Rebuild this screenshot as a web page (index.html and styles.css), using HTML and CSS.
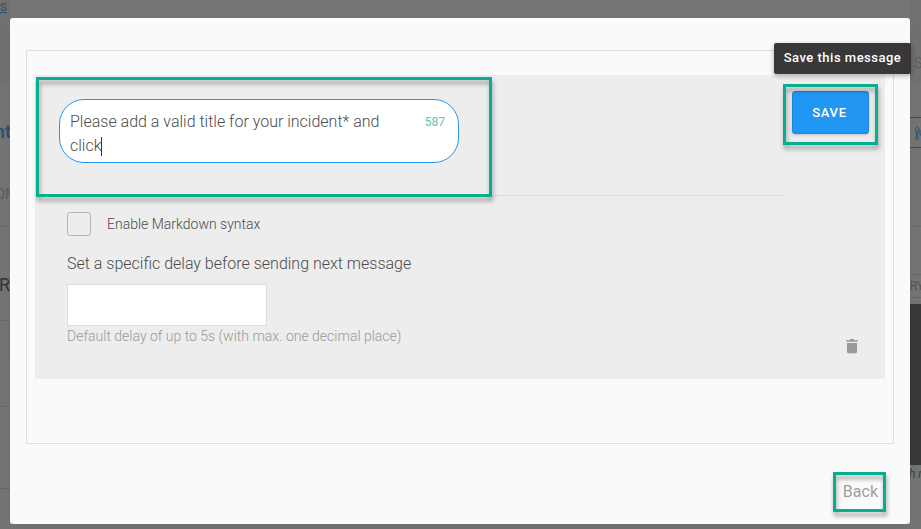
FILE: index.html
```html
<!DOCTYPE html>
<html lang="en">
<head>
<meta charset="utf-8">
<title>Edit message</title>
<link rel="stylesheet" href="styles.css">
</head>
<body>
<div class="screen">
  <aside class="edge edge-left">
    <div class="band"><span class="link">cs</span></div>
    <div class="row heading">nt</div>
    <div class="row tab"><span>OM</span></div>
    <div class="row section">R</div>
    <div class="field"></div>
    <div class="row rule"></div>
    <div class="row dashed"></div>
  </aside>
  <main class="modal">
    <section class="frame">
      <div class="panel">
        <div class="editor">
          <div class="compose">
            <div class="bubble">
              <div class="message">Please add a valid title for your incident* and click<span class="caret"></span></div>
              <span class="count">587</span>
            </div>
            <div class="mark mark-message"></div>
          </div>
          <label class="option"><span class="checkbox"></span><span>Enable Markdown syntax</span></label>
          <div class="delay">
            <div class="label">Set a specific delay before sending next message</div>
            <div class="input"></div>
            <div class="hint">Default delay of up to 5s (with max. one decimal place)</div>
          </div>
        </div>
        <div class="actions">
          <div class="save-wrap">
            <button class="save">SAVE</button>
            <div class="mark mark-save"></div>
            <div class="tooltip">Save this message</div>
          </div>
          <svg class="trash" viewBox="0 0 12 15"><path d="M4.3 0h3.4l.8 1.2H12v1.5H0V1.2h3.5zM1 4h10v8.8c0 .8-.5 1.4-1.3 1.4H2.3c-.8 0-1.3-.6-1.3-1.4z"/></svg>
        </div>
      </div>
    </section>
    <footer class="footer"><span class="back">Back<span class="mark mark-back"></span></span></footer>
  </main>
  <aside class="edge edge-right">
    <div class="band band-right">S</div>
    <div class="share"><svg viewBox="0 0 12 14"><path d="M3 1a1.5 1.5 0 0 1 0 3L2 7l1 3a1.5 1.5 0 1 1-2 0l1-3-1-3a1.5 1.5 0 0 1 2-3M5 3v5h7" /></svg></div>
    <div class="row line"></div>
    <div class="chip">RY</div>
    <div class="dark"></div>
    <div class="note">h m</div>
  </aside>
</div>
</body>
</html>
```
FILE: styles.css
```css
* { box-sizing: border-box; }
body { margin: 0; font-family: Roboto, "Liberation Sans", sans-serif; }
.screen {
  width: 921px; height: 529px; overflow: hidden;
  display: grid; grid-template-columns: 10px 900px 11px;
  background: #757575;
}
.edge { height: 529px; overflow: hidden; white-space: nowrap; color: #545454; }
.edge-left > div { display: flex; justify-content: flex-end; }
.band { height: 83px; background: #717171; font-size: 14px; line-height: 12px; }
.link { color: #2d5170; text-decoration: underline; margin-right: 3px; }
.row.heading { height: 97px; padding-top: 39px; font-size: 18px; line-height: 20px; font-weight: 700; color: #2d5170; margin-right: -1px; }
.row.tab { height: 47px; padding-top: 4px; line-height: 20px; font-size: 15px; font-weight: 300; border-bottom: 1px solid #686868; }
.row.tab span { margin-right: -8px; }
.row.section { height: 93px; padding-top: 48px; font-size: 18px; line-height: 20px; color: #333; }
.field { height: 38px; border: 1px solid #696969; border-width: 1px 1px 0 0; border-top-right-radius: 3px; }
.row.rule { height: 49px; border-bottom: 1px solid #686868; }
.row.dashed { height: 82px; border-bottom: 1px dashed #666; }
.modal {
  margin-top: 18px; height: 506px; padding: 32px 16px 0;
  background: #fafafa; border-radius: 3px;
  box-shadow: 0 8px 16px rgba(0,0,0,.06);
  position: relative;
}
.frame { height: 394px; padding: 24px 8px; border: 1px solid #dedede; }
.panel { display: flex; justify-content: space-between; height: 304px; padding-left: 24px; background: #ededed; }
.editor { width: 725px; }
.compose { position: relative; height: 121px; padding-top: 24px; border-bottom: 1px solid #dcdcdc; }
.bubble {
  display: flex; justify-content: space-between;
  width: 400px; height: 64px; padding: 9px 13px 0 10px;
  border: 1px solid #2196f3; border-radius: 25px; background: #fff;
}
.message { width: 330px; padding-top: 1px; font-size: 16px; line-height: 24px; font-weight: 300; color: #4c4c4c; }
.caret { display: inline-block; width: 1px; height: 19px; margin-left: -1px; background: #333; vertical-align: -5px; }
.count { font-size: 12px; line-height: 26px; color: #5bc6ae; }
.mark { position: absolute; border: 3px solid #07ae8f; pointer-events: none; filter: drop-shadow(1px 4px 2px rgba(0,0,0,.35)); }
.mark-message { left: -23px; top: 2px; width: 456px; height: 120px; }
.option { display: flex; align-items: center; gap: 16px; margin: 16px 0 0 8px; height: 24px; font-size: 14px; font-weight: 300; color: #4c4c4c; }
.checkbox { width: 24px; height: 24px; border: 1px solid #b5b5b5; border-radius: 3px; }
.delay { margin: 16px 0 0 8px; font-weight: 300; }
.label { height: 32px; font-size: 16px; line-height: 24px; color: #4c4c4c; }
.input { width: 200px; height: 42px; background: #fff; border: 1px solid #dcdcdc; }
.hint { font-size: 14px; line-height: 20px; color: #999; }
.actions { display: flex; flex-direction: column; justify-content: space-between; align-items: flex-end; padding: 16px 16px 25px 0; }
.save-wrap { position: relative; }
.save {
  display: block; width: 77px; height: 43px; padding: 0 2px 0 0;
  border: 1px solid #1e87db; border-radius: 3px;
  background: #2196f3; color: #fff; font: 500 13px/41px Roboto, sans-serif; letter-spacing: .7px;
  box-shadow: 0 1px 3px rgba(0,0,0,.2);
}
.mark-save { left: -9px; top: -7px; width: 95px; height: 61px; }
.tooltip {
  position: absolute; left: -18px; top: -48px; width: 137px; height: 31px; z-index: 2;
  background: #383838; color: #fff; border-radius: 2px; white-space: nowrap;
  font-size: 13px; line-height: 30px; font-weight: 500; letter-spacing: .5px; text-align: center;
  box-shadow: 0 2px 5px rgba(0,0,0,.3);
}
.trash { width: 12px; height: 15px; fill: #999; margin-right: 11px; }
.footer { display: flex; justify-content: flex-end; padding: 37px 16px 0 0; font-size: 16px; line-height: 22px; color: #9e9e9e; }
.back { position: relative; }
.mark-back { left: -10px; top: -9px; width: 53px; height: 40px; }
.band-right { padding: 57px 0 0 4px; font-size: 14px; font-weight: 300; }
.share { margin-top: 34px; height: 31px; padding: 8px 0 0 5px; border: 1px solid #2d5170; border-width: 1px 0; }
.share svg { width: 12px; height: 14px; fill: none; stroke: #2d5170; }
.row.line { height: 79px; margin-top: -39px; border-bottom: 1px solid #686868; padding-top: 0; }
.edge-right .row.line { margin-top: 0; }
.chip { margin-top: 47px; height: 24px; border: 1px solid #676767; border-width: 1px 0; font-size: 12px; line-height: 22px; }
.dark { margin-top: 6px; height: 161px; background: #383838; }
.note { font-size: 12px; line-height: 18px; font-style: italic; color: #444; margin-left: -1px; }
```
